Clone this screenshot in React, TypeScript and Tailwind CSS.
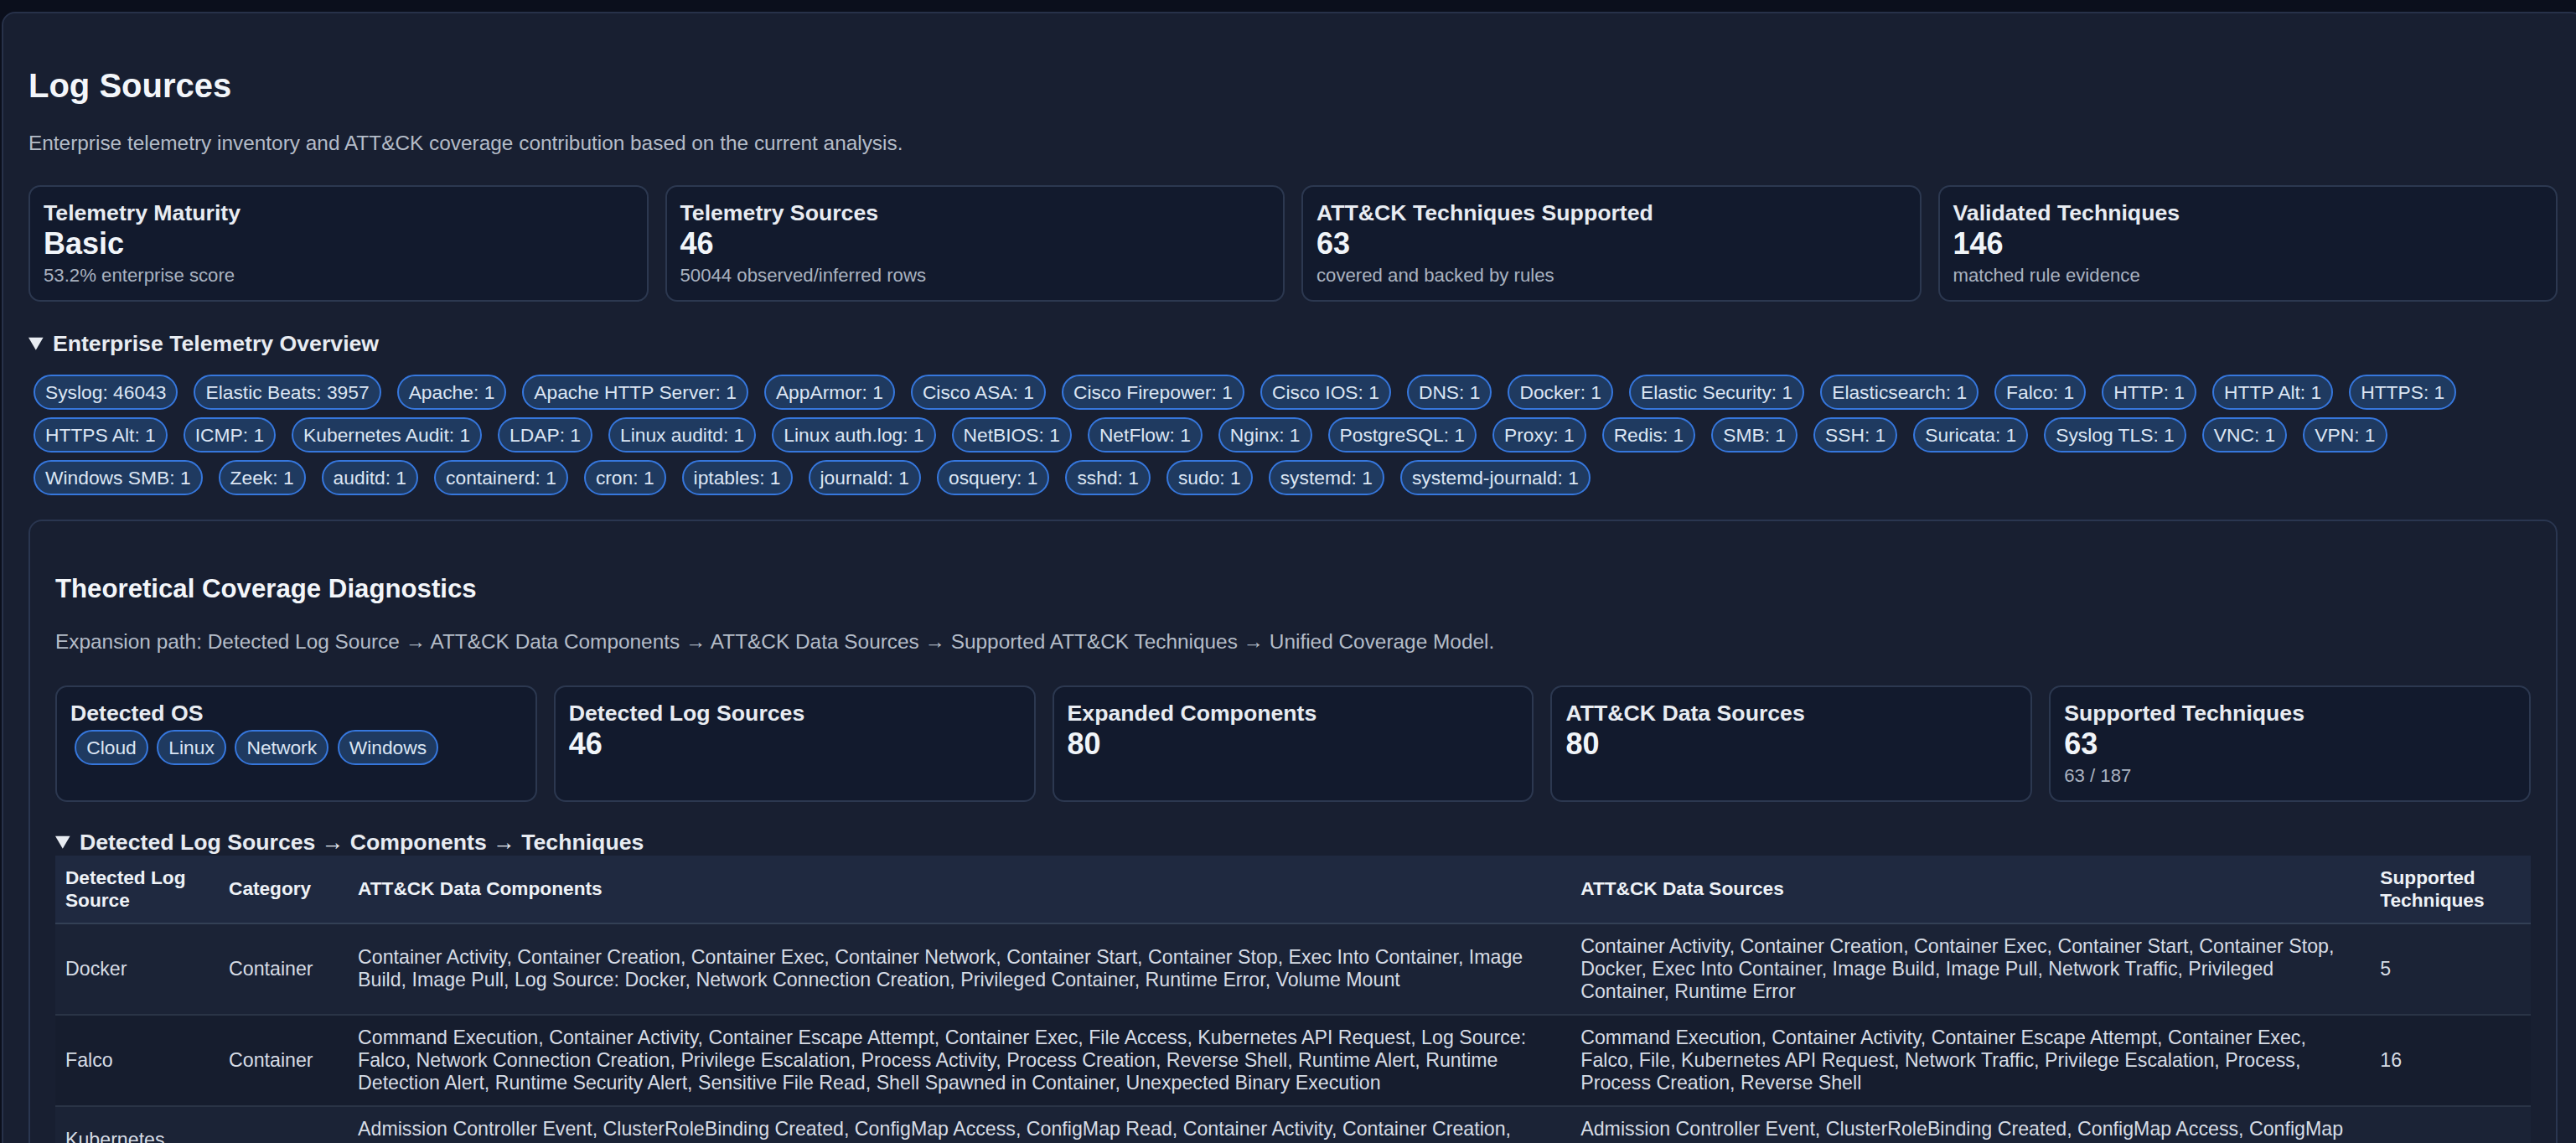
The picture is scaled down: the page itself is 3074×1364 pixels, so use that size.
import React from "react";

type Stat = { label: string; value?: string; sub?: string };

const topStats: Stat[] = [
  { label: "Telemetry Maturity", value: "Basic", sub: "53.2% enterprise score" },
  { label: "Telemetry Sources", value: "46", sub: "50044 observed/inferred rows" },
  { label: "ATT&CK Techniques Supported", value: "63", sub: "covered and backed by rules" },
  { label: "Validated Techniques", value: "146", sub: "matched rule evidence" },
];

const sources: string[] = [
  "Syslog: 46043", "Elastic Beats: 3957", "Apache: 1", "Apache HTTP Server: 1", "AppArmor: 1",
  "Cisco ASA: 1", "Cisco Firepower: 1", "Cisco IOS: 1", "DNS: 1", "Docker: 1", "Elastic Security: 1",
  "Elasticsearch: 1", "Falco: 1", "HTTP: 1", "HTTP Alt: 1", "HTTPS: 1", "HTTPS Alt: 1", "ICMP: 1",
  "Kubernetes Audit: 1", "LDAP: 1", "Linux auditd: 1", "Linux auth.log: 1", "NetBIOS: 1", "NetFlow: 1",
  "Nginx: 1", "PostgreSQL: 1", "Proxy: 1", "Redis: 1", "SMB: 1", "SSH: 1", "Suricata: 1",
  "Syslog TLS: 1", "VNC: 1", "VPN: 1", "Windows SMB: 1", "Zeek: 1", "auditd: 1", "containerd: 1",
  "cron: 1", "iptables: 1", "journald: 1", "osquery: 1", "sshd: 1", "sudo: 1", "systemd: 1",
  "systemd-journald: 1",
];

const osList = ["Cloud", "Linux", "Network", "Windows"];

interface Row {
  source: string;
  category: string;
  components: string;
  dataSources: string;
  techniques: number;
}

const rows: Row[] = [
  {
    source: "Docker",
    category: "Container",
    components:
      "Container Activity, Container Creation, Container Exec, Container Network, Container Start, Container Stop, Exec Into Container, Image Build, Image Pull, Log Source: Docker, Network Connection Creation, Privileged Container, Runtime Error, Volume Mount",
    dataSources:
      "Container Activity, Container Creation, Container Exec, Container Start, Container Stop, Docker, Exec Into Container, Image Build, Image Pull, Network Traffic, Privileged Container, Runtime Error",
    techniques: 5,
  },
  {
    source: "Falco",
    category: "Container",
    components:
      "Command Execution, Container Activity, Container Escape Attempt, Container Exec, File Access, Kubernetes API Request, Log Source: Falco, Network Connection Creation, Privilege Escalation, Process Activity, Process Creation, Reverse Shell, Runtime Alert, Runtime Detection Alert, Runtime Security Alert, Sensitive File Read, Shell Spawned in Container, Unexpected Binary Execution",
    dataSources:
      "Command Execution, Container Activity, Container Escape Attempt, Container Exec, Falco, File, Kubernetes API Request, Network Traffic, Privilege Escalation, Process, Process Creation, Reverse Shell",
    techniques: 16,
  },
  {
    source: "Kubernetes Audit",
    category: "Container",
    components:
      "Admission Controller Event, ClusterRoleBinding Created, ConfigMap Access, ConfigMap Read, Container Activity, Container Creation, Container Exec, Kubernetes API Request, Log Source: Kubernetes Audit, Pod Creation, Pod Deletion, RoleBinding Created, Secret Access, Service Account Token Request",
    dataSources:
      "Admission Controller Event, ClusterRoleBinding Created, ConfigMap Access, ConfigMap Read, Container Activity, Container Creation, Container Exec, Kubernetes API Request, Pod, Secret Access",
    techniques: 9,
  },
  {
    source: "Linux auditd",
    category: "Host",
    components:
      "Command Execution, File Access, File Modification, Log Source: Linux auditd, Process Creation, Privilege Escalation, User Account Authentication",
    dataSources: "Command, File, Linux auditd, Process, User Account",
    techniques: 12,
  },
];

function StatCard({ label, value, sub, children }: Stat & { children?: React.ReactNode }) {
  return (
    <div className="rounded-[7px] border border-[#2c3850] bg-[#121a2d] p-2">
      <div className="text-[13.33px] font-bold text-[#e8ecf2]">{label}</div>
      {value && <div className="text-[18px] font-bold text-[#f1f5f9]">{value}</div>}
      {sub && <div className="mt-[2px] text-[11.1px] text-[#a9b2c0]">{sub}</div>}
      {children}
    </div>
  );
}

function Pill({ text }: { text: string }) {
  return (
    <span className="whitespace-nowrap rounded-full border border-[#3677dd] bg-[#1f3a60] px-[6px] py-[3px] text-[11.4px] leading-[13px] text-[#dbe5f3]">
      {text}
    </span>
  );
}

export default function App() {
  return (
    <div className="h-screen w-screen overflow-hidden bg-[#0b0f1c]">
      <div className="[zoom:2] font-['Liberation_Sans',Arial,sans-serif] leading-[normal] text-[#e5e9f0]">
        <div className="ml-[1px] mt-[7px] w-[1541px] rounded-[8px] border border-[#273149] bg-[#181f31] px-[15px] pb-6 pt-[16px]">
          <h2 className="mt-[16px] text-[20px] font-bold text-[#f3f6fa]">Log Sources</h2>
          <p className="mt-[16px] text-[12.2px] text-[#b4bcc8]">
            Enterprise telemetry inventory and ATT&amp;CK coverage contribution based on the current analysis.
          </p>

          <div className="mt-[18px] grid grid-cols-4 gap-[10px]">
            {topStats.map((s) => (
              <StatCard key={s.label} {...s} />
            ))}
          </div>

          <details open className="mt-[17.5px]">
            <summary className="cursor-pointer text-[13.33px] font-bold text-[#e8ecf2]">
              <span className="pl-[3px]">Enterprise Telemetry Overview</span>
            </summary>
            <div className="ml-[3px] mt-[10.5px] flex flex-wrap gap-x-[9.5px] gap-y-[4.6px]">
              {sources.map((s) => (
                <Pill key={s} text={s} />
              ))}
            </div>
          </details>

          <div className="mt-[14.4px] rounded-[8px] border border-[#2a3650] bg-[#181f31] px-[15px] pb-6 pt-[15px]">
            <h3 className="mt-[16.6px] text-[15.6px] font-bold text-[#f3f6fa]">Theoretical Coverage Diagnostics</h3>
            <p className="mt-[15.2px] text-[12.2px] text-[#b4bcc8]">
              Expansion path: Detected Log Source → ATT&amp;CK Data Components → ATT&amp;CK Data Sources → Supported
              ATT&amp;CK Techniques → Unified Coverage Model.
            </p>

            <div className="mt-[19px] grid grid-cols-5 gap-[10px]">
              <StatCard label="Detected OS">
                <div className="ml-[2.6px] mt-[2px] flex flex-wrap gap-[5.3px]">
                  {osList.map((o) => (
                    <Pill key={o} text={o} />
                  ))}
                </div>
              </StatCard>
              <StatCard label="Detected Log Sources" value="46" />
              <StatCard label="Expanded Components" value="80" />
              <StatCard label="ATT&CK Data Sources" value="80" />
              <StatCard label="Supported Techniques" value="63" sub="63 / 187" />
            </div>

            <details open className="mt-[16.5px]">
              <summary className="cursor-pointer text-[13.33px] font-bold text-[#e8ecf2]">
                <span className="pl-[3px]">Detected Log Sources → Components → Techniques</span>
              </summary>
              <table className="w-full table-fixed border-collapse text-left text-[11.6px]">
                <colgroup>
                  <col className="w-[97.5px]" />
                  <col className="w-[77px]" />
                  <col className="w-[729.5px]" />
                  <col className="w-[477px]" />
                  <col className="w-[95.8px]" />
                </colgroup>
                <thead>
                  <tr className="border-b border-[#334055] bg-[#1f2940] text-[11.33px]">
                    <th className="px-[6px] py-[6.5px] font-bold text-[#eef2f7]">Detected Log Source</th>
                    <th className="px-[6px] py-[6.5px] font-bold text-[#eef2f7]">Category</th>
                    <th className="px-[6px] py-[6.5px] font-bold text-[#eef2f7]">ATT&amp;CK Data Components</th>
                    <th className="px-[6px] py-[6.5px] font-bold text-[#eef2f7]">ATT&amp;CK Data Sources</th>
                    <th className="px-[6px] py-[6.5px] font-bold text-[#eef2f7]">Supported Techniques</th>
                  </tr>
                </thead>
                <tbody>
                  {rows.map((r, i) => (
                    <tr
                      key={r.source}
                      className={`border-b border-[#2a3446] ${i % 2 === 0 ? "bg-[#1b2336]" : "bg-[#161d2e]"}`}
                    >
                      <td className="px-[6px] py-[6.5px] align-middle text-[#d6dce5]">{r.source}</td>
                      <td className="px-[6px] py-[6.5px] align-middle text-[#d6dce5]">{r.category}</td>
                      <td className="px-[6px] py-[6.5px] align-middle text-[#d6dce5]">{r.components}</td>
                      <td className="px-[6px] py-[6.5px] align-middle text-[#d6dce5]">{r.dataSources}</td>
                      <td className="px-[6px] py-[6.5px] align-middle text-[#d6dce5]">{r.techniques}</td>
                    </tr>
                  ))}
                </tbody>
              </table>
            </details>
          </div>
        </div>
      </div>
    </div>
  );
}
